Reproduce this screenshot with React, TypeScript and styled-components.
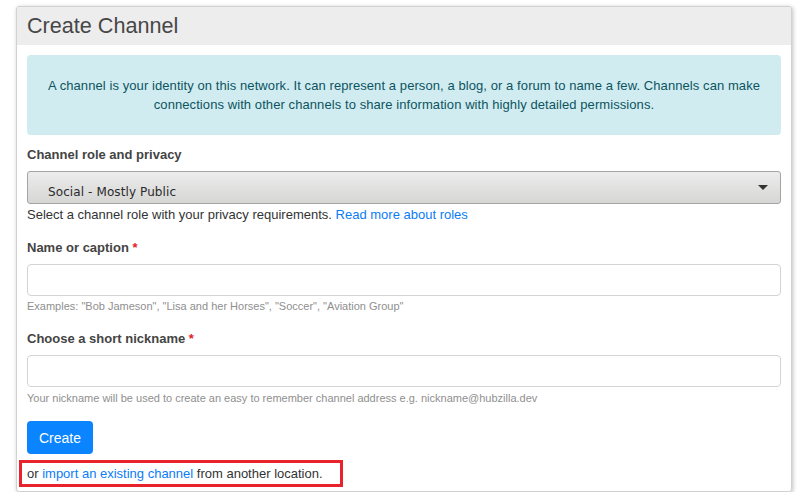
import styled, { createGlobalStyle } from 'styled-components';

const GlobalStyle = createGlobalStyle`
  html, body {
    margin: 0;
    padding: 0;
    background: #ffffff;
  }
  body {
    font-family: "Liberation Sans", Arial, sans-serif;
    font-size: 13px;
    color: #333333;
  }
`;

// Layout
const Page = styled.div`
  padding: 6px 0 0 16px;
`;

const Card = styled.section`
  width: 774px;
  border: 1px solid #d2d2d2;
  border-radius: 3px;
  box-shadow: 1px 1px 4px rgba(0, 0, 0, 0.25);
  background: #ffffff;
  overflow: hidden;
`;

const CardHeader = styled.header`
  height: 38px;
  display: flex;
  align-items: center;
  padding: 0 10px;
  background: #ededed;
`;

const Title = styled.h2`
  margin: 0;
  font-size: 21.6px;
  font-weight: 400;
  color: #474747;
`;

const CardBody = styled.div`
  padding: 10px 10px 4px;
`;

const InfoBox = styled.div`
  padding: 21px 20px;
  background: #d1ecf1;
  color: #0c5460;
  border-radius: 4px;
  text-align: center;
  line-height: 19px;
  letter-spacing: 0.08px;
`;

const Field = styled.div<{ $top: number }>`
  margin-top: ${(p) => p.$top}px;
`;

const Label = styled.label`
  display: block;
  font-weight: 700;
  color: #444444;
  line-height: 16px;
  margin-bottom: 8px;
`;

const Required = styled.span`
  color: #e3202a;
`;

const SelectBox = styled.div`
  position: relative;
  height: 31px;
  border: 1px solid #a4a4a4;
  border-radius: 3px;
  background: linear-gradient(#ececec, #d6d6d5);
  overflow: hidden;
`;

const SelectText = styled.span`
  display: block;
  padding: 12px 0 0 20px;
  font-family: "DejaVu Sans", sans-serif;
  font-size: 12px;
  line-height: 16px;
  letter-spacing: 0.1px;
  color: #2a2a2a;
`;

const Caret = styled.span`
  position: absolute;
  right: 12px;
  top: 13px;
  width: 0;
  height: 0;
  border-left: 5px solid transparent;
  border-right: 5px solid transparent;
  border-top: 5px solid #333333;
`;

const TextInput = styled.input`
  display: block;
  box-sizing: border-box;
  width: 100%;
  height: 32px;
  margin-top: 8px;
  border: 1px solid #d4d4d4;
  border-radius: 4px;
  font: inherit;
  padding: 0 10px;
`;

const Help = styled.div`
  margin-top: 3px;
  line-height: 16px;
  color: #333333;
`;

const Small = styled.div<{ $top?: number }>`
  margin-top: ${(p) => p.$top ?? 3}px;
  font-size: 11px;
  line-height: 14px;
  color: #8f8f8f;
`;

const Link = styled.a`
  color: #0a7cf6;
  text-decoration: none;
`;

const Button = styled.button`
  display: block;
  margin-top: 16px;
  height: 33px;
  padding: 0 12px;
  border: none;
  border-radius: 4px;
  background: #0a84ff;
  color: #ffffff;
  font-family: "Liberation Sans", Arial, sans-serif;
  font-size: 14px;
`;

const ImportNote = styled.p`
  display: inline-block;
  margin: 6px 0 0 -8px;
  padding: 0 17px 0 5px;
  border: 3px solid #e8232b;
  line-height: 21px;
  color: #333333;
`;

export default function App() {
  return (
    <>
      <GlobalStyle />
      <Page>
        <Card>
          <CardHeader>
            <Title>Create Channel</Title>
          </CardHeader>
          <CardBody>
            <InfoBox>
              A channel is your identity on this network. It can represent a person, a blog, or a
              forum to name a few. Channels can make connections with other channels to share
              information with highly detailed permissions.
            </InfoBox>

            <Field $top={12}>
              <Label>Channel role and privacy</Label>
              <SelectBox>
                <SelectText>Social - Mostly Public</SelectText>
                <Caret />
              </SelectBox>
              <Help>
                Select a channel role with your privacy requirements.{' '}
                <Link href="#">Read more about roles</Link>
              </Help>
            </Field>

            <Field $top={17}>
              <Label>
                Name or caption <Required>*</Required>
              </Label>
              <TextInput type="text" />
              <Small>Examples: "Bob Jameson", "Lisa and her Horses", "Soccer", "Aviation Group"</Small>
            </Field>

            <Field $top={18}>
              <Label>
                Choose a short nickname <Required>*</Required>
              </Label>
              <TextInput type="text" />
              <Small $top={4}>
                Your nickname will be used to create an easy to remember channel address e.g.
                nickname@hubzilla.dev
              </Small>
            </Field>

            <Button>Create</Button>
            <ImportNote>
              or <Link href="#">import an existing channel</Link> from another location.
            </ImportNote>
          </CardBody>
        </Card>
      </Page>
    </>
  );
}
